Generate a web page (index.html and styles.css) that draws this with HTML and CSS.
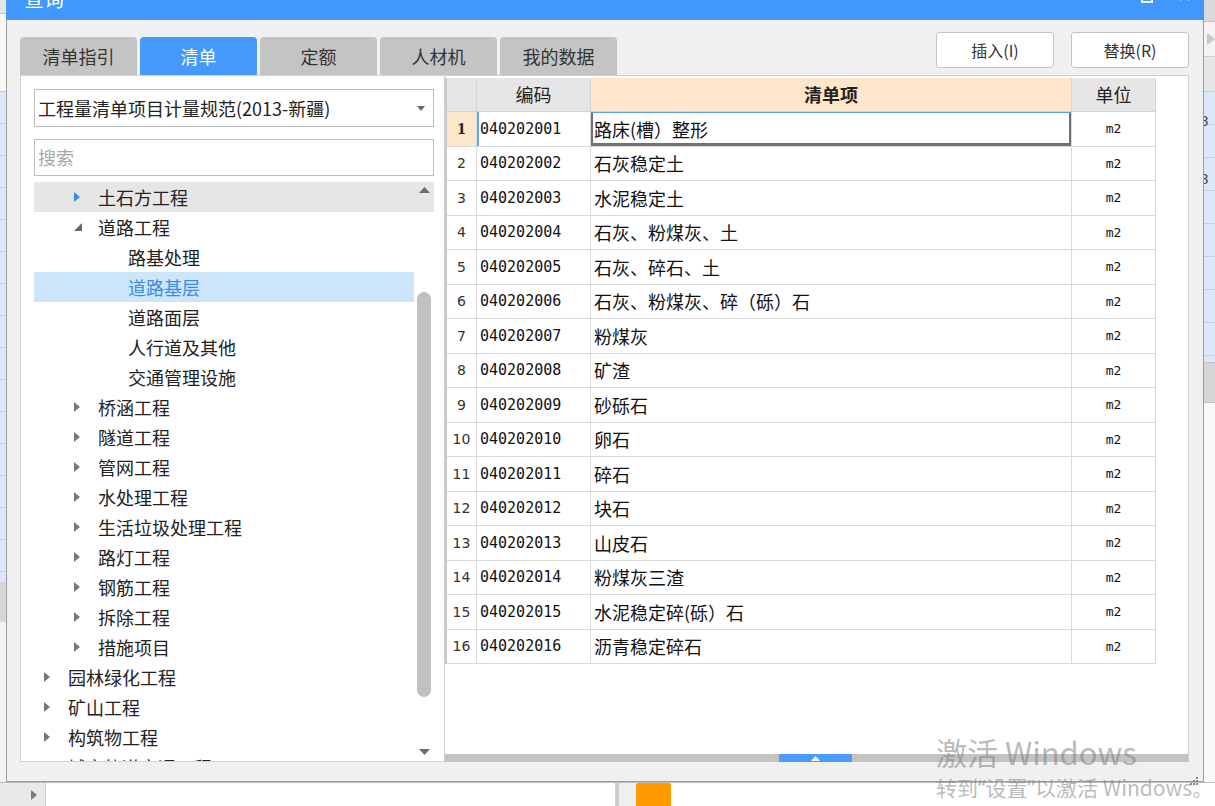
FILE: index.html
```html
<!DOCTYPE html>
<html lang="zh-CN">
<head>
<meta charset="utf-8">
<title>查询</title>
<link rel="stylesheet" href="styles.css">
</head>
<body>
<div class="screen">
  <div class="main">
    <div class="bg-left">
      <div class="bl-top"></div>
      <div class="bl-white"></div>
      <div class="bl-rows"></div>
      <div class="bl-grey"></div>
      <div class="bl-end"></div>
    </div>

    <div class="dialog">
      <div class="titlebar">
        <span class="title">查询</span>
        <span class="tb-btns"><span class="tb-max"></span><span class="tb-close">✕</span></span>
      </div>

      <div class="dlg-body">
        <div class="toprow">
          <div class="tabs">
            <div class="tab">清单指引</div>
            <div class="tab active">清单</div>
            <div class="tab">定额</div>
            <div class="tab">人材机</div>
            <div class="tab">我的数据</div>
          </div>
          <div class="btns">
            <div class="btn">插入(I)</div>
            <div class="btn">替换(R)</div>
          </div>
        </div>

        <div class="panels">
          <div class="left-panel">
            <div class="select">
              <span class="select-text">工程量清单项目计量规范(2013-新疆)</span>
              <svg class="caret" width="8" height="5" viewBox="0 0 8 5"><path d="M0 0H8L4 5Z" fill="#6b6b6b"/></svg>
            </div>
            <div class="search">搜索</div>
            <div class="tree">
              <div class="tree-list">
                <div class="node l2 hover"><span class="arw"><svg width="6" height="10" viewBox="0 0 6 10"><path d="M0 0L6 5L0 10Z" fill="#3d8ee8"/></svg></span>土石方工程</div>
                <div class="node l2"><span class="arw"><svg width="8" height="8" viewBox="0 0 8 8"><path d="M8 0V8H0Z" fill="#666"/></svg></span>道路工程</div>
                <div class="node l3">路基处理</div>
                <div class="node l3 selected">道路基层</div>
                <div class="node l3">道路面层</div>
                <div class="node l3">人行道及其他</div>
                <div class="node l3">交通管理设施</div>
                <div class="node l2"><span class="arw"><svg width="6" height="10" viewBox="0 0 6 10"><path d="M0 0L6 5L0 10Z" fill="#777"/></svg></span>桥涵工程</div>
                <div class="node l2"><span class="arw"><svg width="6" height="10" viewBox="0 0 6 10"><path d="M0 0L6 5L0 10Z" fill="#777"/></svg></span>隧道工程</div>
                <div class="node l2"><span class="arw"><svg width="6" height="10" viewBox="0 0 6 10"><path d="M0 0L6 5L0 10Z" fill="#777"/></svg></span>管网工程</div>
                <div class="node l2"><span class="arw"><svg width="6" height="10" viewBox="0 0 6 10"><path d="M0 0L6 5L0 10Z" fill="#777"/></svg></span>水处理工程</div>
                <div class="node l2"><span class="arw"><svg width="6" height="10" viewBox="0 0 6 10"><path d="M0 0L6 5L0 10Z" fill="#777"/></svg></span>生活垃圾处理工程</div>
                <div class="node l2"><span class="arw"><svg width="6" height="10" viewBox="0 0 6 10"><path d="M0 0L6 5L0 10Z" fill="#777"/></svg></span>路灯工程</div>
                <div class="node l2"><span class="arw"><svg width="6" height="10" viewBox="0 0 6 10"><path d="M0 0L6 5L0 10Z" fill="#777"/></svg></span>钢筋工程</div>
                <div class="node l2"><span class="arw"><svg width="6" height="10" viewBox="0 0 6 10"><path d="M0 0L6 5L0 10Z" fill="#777"/></svg></span>拆除工程</div>
                <div class="node l2"><span class="arw"><svg width="6" height="10" viewBox="0 0 6 10"><path d="M0 0L6 5L0 10Z" fill="#777"/></svg></span>措施项目</div>
                <div class="node l1"><span class="arw"><svg width="6" height="10" viewBox="0 0 6 10"><path d="M0 0L6 5L0 10Z" fill="#777"/></svg></span>园林绿化工程</div>
                <div class="node l1"><span class="arw"><svg width="6" height="10" viewBox="0 0 6 10"><path d="M0 0L6 5L0 10Z" fill="#777"/></svg></span>矿山工程</div>
                <div class="node l1"><span class="arw"><svg width="6" height="10" viewBox="0 0 6 10"><path d="M0 0L6 5L0 10Z" fill="#777"/></svg></span>构筑物工程</div>
                <div class="node l1"><span class="arw"><svg width="6" height="10" viewBox="0 0 6 10"><path d="M0 0L6 5L0 10Z" fill="#777"/></svg></span>城市轨道交通工程</div>
              </div>
              <div class="vscroll">
                <div class="vs-up"><svg width="11" height="6" viewBox="0 0 11 6"><path d="M0 6L5.5 0L11 6Z" fill="#6e6e6e"/></svg></div>
                <div class="vs-track"><div class="vs-thumb"></div></div>
                <div class="vs-down"><svg width="11" height="6" viewBox="0 0 11 6"><path d="M0 0H11L5.5 6Z" fill="#6e6e6e"/></svg></div>
              </div>
            </div>
          </div>

          <div class="right-panel">
            <div class="grid-wrap">
              <div class="grid">
                <div class="hc"></div><div class="hc">编码</div><div class="hc hc-main">清单项</div><div class="hc">单位</div>

                <div class="c num cur">1</div><div class="c code cur-code">040202001</div><div class="c name sel">路床(槽）整形</div><div class="c unit">m2</div>
                <div class="c num">2</div><div class="c code">040202002</div><div class="c name">石灰稳定土</div><div class="c unit">m2</div>
                <div class="c num">3</div><div class="c code">040202003</div><div class="c name">水泥稳定土</div><div class="c unit">m2</div>
                <div class="c num">4</div><div class="c code">040202004</div><div class="c name">石灰、粉煤灰、土</div><div class="c unit">m2</div>
                <div class="c num">5</div><div class="c code">040202005</div><div class="c name">石灰、碎石、土</div><div class="c unit">m2</div>
                <div class="c num">6</div><div class="c code">040202006</div><div class="c name">石灰、粉煤灰、碎（砾）石</div><div class="c unit">m2</div>
                <div class="c num">7</div><div class="c code">040202007</div><div class="c name">粉煤灰</div><div class="c unit">m2</div>
                <div class="c num">8</div><div class="c code">040202008</div><div class="c name">矿渣</div><div class="c unit">m2</div>
                <div class="c num">9</div><div class="c code">040202009</div><div class="c name">砂砾石</div><div class="c unit">m2</div>
                <div class="c num">10</div><div class="c code">040202010</div><div class="c name">卵石</div><div class="c unit">m2</div>
                <div class="c num">11</div><div class="c code">040202011</div><div class="c name">碎石</div><div class="c unit">m2</div>
                <div class="c num">12</div><div class="c code">040202012</div><div class="c name">块石</div><div class="c unit">m2</div>
                <div class="c num">13</div><div class="c code">040202013</div><div class="c name">山皮石</div><div class="c unit">m2</div>
                <div class="c num">14</div><div class="c code">040202014</div><div class="c name">粉煤灰三渣</div><div class="c unit">m2</div>
                <div class="c num">15</div><div class="c code">040202015</div><div class="c name">水泥稳定碎(砾）石</div><div class="c unit">m2</div>
                <div class="c num">16</div><div class="c code">040202016</div><div class="c name">沥青稳定碎石</div><div class="c unit">m2</div>
              </div>
            </div>
            <div class="hbar">
              <div class="hbar-thumb"><svg width="9" height="5" viewBox="0 0 9 5"><path d="M0 5L4.5 0L9 5Z" fill="#fff"/></svg></div>
            </div>
          </div>
        </div>
      </div>

      <div class="grip">
        <svg width="10" height="10" viewBox="0 0 10 10" fill="#8a8a8a">
          <rect x="7" y="1" width="2" height="2"/><rect x="4" y="4" width="2" height="2"/><rect x="7" y="4" width="2" height="2"/>
          <rect x="1" y="7" width="2" height="2"/><rect x="4" y="7" width="2" height="2"/><rect x="7" y="7" width="2" height="2"/>
        </svg>
      </div>
    </div>

    <div class="bg-right">
      <div class="br-top"></div>
      <div class="br-arrow"><svg width="8" height="12" viewBox="0 0 8 12"><path d="M0 0L8 6L0 12Z" fill="#c8c8c8"/></svg></div>
      <div class="br-head"></div>
      <div class="br-rows"><span class="br-txt">8</span><span class="br-txt">8</span></div>
      <div class="br-grey"></div>
      <div class="br-end"></div>
    </div>
  </div>

  <div class="bottombar">
    <div class="bb-left"><svg width="6" height="10" viewBox="0 0 6 10"><path d="M0 0L6 5L0 10Z" fill="#7a7a7a"/></svg></div>
    <div class="bb-white"></div>
    <div class="bb-sep"></div>
    <div class="bb-grey"></div>
    <div class="bb-orange"></div>
    <div class="bb-rest"></div>
  </div>

  <div class="watermark">
    <div class="wm1">激活 Windows</div>
    <div class="wm2">转到<span class="q">“</span>设置<span class="q">”</span>以激活 Windows。</div>
  </div>
</div>
</body>
</html>
```

FILE: styles.css
```css
* { box-sizing: border-box; margin: 0; padding: 0; }
html, body { width: 1215px; height: 806px; overflow: hidden; }
body {
  font-family: "Noto Sans CJK SC", "Microsoft YaHei", sans-serif;
  color: #222;
  background: #f0f0f0;
}
.screen { position: relative; width: 1215px; height: 806px; display: flex; flex-direction: column; overflow: hidden; }
.main { display: flex; height: 782px; flex: none; }

/* background app strips */
.bg-left { width: 6px; display: flex; flex-direction: column; }
.bl-top { height: 14px; background: #e4e4e4; border-bottom: 1px solid #c8c8c8; }
.bl-white { height: 78px; background: #f7f7f7; border-bottom: 1px solid #c8c8c8; }
.bl-rows {
  height: 490px;
  background: repeating-linear-gradient(to bottom, #dce8f9 0, #dce8f9 31px, #c9d3e0 31px, #c9d3e0 32px);
}
.bl-grey { height: 40px; background: #d6d6d6; }
.bl-end { flex: 1; background: #f2f2f2; }

.bg-right { width: 11px; display: flex; flex-direction: column; }
.br-top { height: 22px; background: #dadada; border-bottom: 1px solid #c4c4c4; }
.br-arrow { height: 34px; background: #f3f3f3; display: flex; align-items: center; padding-left: 3px; }
.br-head { height: 36px; background: #e6e6e6; border-top: 1px solid #cfcfcf; border-bottom: 1px solid #cfcfcf; }
.br-rows {
  height: 270px;
  display: flex; flex-direction: column;
  background: repeating-linear-gradient(to bottom, #dde9fb 0, #dde9fb 32px, #c9d3e0 32px, #c9d3e0 33px);
  font-family: "Liberation Sans", sans-serif; font-size: 15px; color: #444;
}
.br-txt { height: 58px; line-height: 58px; margin-left: -4px; }
.br-grey { height: 40px; background: #d6d6d6; border-top: 1px solid #c4c4c4; }
.br-end { flex: 1; background: #f8f8f8; border-top: 1px solid #c4c4c4; }

/* dialog */
.dialog {
  position: relative;
  width: 1198px;
  display: flex; flex-direction: column;
  background: #f0f0f0;
  border: 1px solid #9d9d9d; border-top: none;
}
.titlebar {
  flex: none;
  height: 20px;
  background: #4198fc;
  overflow: hidden;
  display: flex; justify-content: space-between; align-items: flex-start;
  padding: 0 12px 0 18px;
  margin: 0 -1px;
}
.title { color: #fff; font-size: 20px; line-height: 26px; margin-top: -14px; }
.tb-btns { display: flex; gap: 24px; align-items: flex-start; }
.tb-max { width: 12px; height: 12px; border: 2px solid #fff; margin-top: -9px; }
.tb-close { color: #fff; font-size: 18px; line-height: 20px; margin-top: -14px; font-family: "DejaVu Sans", sans-serif; font-weight: bold; }

.dlg-body { flex: 1; min-height: 0; display: flex; flex-direction: column; padding: 12px 14px 19px 13px; }
.toprow { flex: none; display: flex; justify-content: space-between; align-items: flex-start; height: 43px; }
.tabs { display: flex; gap: 3px; margin-top: 5px; }
.tab {
  width: 117px; height: 38px;
  background: #c4c4c4;
  border-radius: 4px 4px 0 0;
  text-align: center;
  font-size: 18px; line-height: 38px;
  color: #333;
}
.tab.active { background: #4499fb; color: #fff; }
.btns { display: flex; gap: 17px; }
.btn {
  width: 118px; height: 36px;
  background: #fff;
  border: 1px solid #c6c6c6;
  border-radius: 3px;
  text-align: center;
  font-size: 16px; line-height: 34px;
  color: #333;
}

.panels { flex: 1; display: flex; min-height: 0; overflow: hidden; }

/* left panel */
.left-panel {
  width: 424px;
  background: #fff;
  border: 1px solid #d4d4d4; border-right: none;
  padding: 13px 10px 0 13px;
  display: flex; flex-direction: column;
  min-height: 0;
}
.select {
  flex: none;
  height: 38px;
  border: 1px solid #bdbdbd;
  display: flex; align-items: center; justify-content: space-between;
  padding: 0 8px 0 3px;
}
.select-text { font-size: 18px; line-height: 36px; color: #222; white-space: nowrap; }
.search {
  flex: none;
  margin-top: 12px;
  height: 37px;
  border: 1px solid #bdbdbd;
  padding-left: 3px;
  font-size: 18px; line-height: 35px;
  color: #a8a8a8;
}
.tree { margin-top: 6px; flex: 1; display: flex; overflow: hidden; min-height: 0; }
.tree-list { flex: 1; overflow: hidden; }
.node {
  height: 30px;
  display: flex; align-items: center;
  font-size: 18px; line-height: 30px;
  white-space: nowrap;
  color: #222;
}
.node.l1 { padding-left: 10px; }
.node.l2 { padding-left: 40px; }
.node.l3 { padding-left: 94px; }
.arw { width: 24px; display: flex; align-items: center; }
.node.hover { background: #e6e6e6; }
.node.selected { background: #cce5fa; color: #3c8de6; }

.vscroll { width: 20px; display: flex; flex-direction: column; min-height: 0; }
.vs-up { flex: none; height: 30px; background: #e6e6e6; display: flex; justify-content: center; padding-top: 5px; }
.vs-track { flex: 1; min-height: 0; padding-top: 80px; display: flex; justify-content: center; align-items: flex-start; }
.vs-thumb { width: 14px; height: 405px; background: #c1c1c1; border-radius: 7px; }
.vs-down { flex: none; height: 14px; display: flex; justify-content: center; padding-top: 2px; }

/* right panel */
.right-panel {
  flex: 1;
  background: #fff;
  border: 1px solid #cfcfcf; border-bottom: none;
  display: flex; flex-direction: column;
  min-height: 0;
}
.grid-wrap { flex: 1; min-height: 0; padding-top: 2px; }
.grid {
  display: grid;
  grid-template-columns: 30px 114px 481px 84px;
  grid-template-rows: 34px;
  grid-auto-rows: 34.5px;
  width: 711px;
  border-left: 2px solid #c9c9c9;
}
.hc {
  background: #e6e6e6;
  border-right: 1px solid #d4d4d4; border-bottom: 1px solid #d4d4d4;
  text-align: center;
  font-size: 18px; line-height: 33px;
  color: #222;
}
.hc-main { background: #fde6c9; font-weight: bold; }
.c {
  border-right: 1px solid #dadada; border-bottom: 1px solid #dadada;
  display: flex; align-items: center;
  white-space: nowrap;
  color: #111;
}
.num {
  justify-content: center;
  font-family: "DejaVu Sans", sans-serif; font-size: 14px; color: #333;
}
.num.cur { background: #fde6c9; font-family: "Liberation Serif", serif; font-weight: bold; font-size: 17px; color: #222; }
.code { padding-left: 3px; font-family: "DejaVu Sans Mono", monospace; font-size: 15px; }
.cur-code { box-shadow: inset 2px 0 0 #6aa6ec; }
.name { padding-left: 3px; font-size: 18px; }
.name.sel { box-shadow: inset 0 1px 0 #5c9fec, inset 2px 0 0 #707070, inset -2px 0 0 #707070, inset 0 -3px 0 #707070; }
.unit { justify-content: center; font-family: "DejaVu Sans Mono", monospace; font-size: 13px; }

.hbar { flex: none; height: 8px; background: #c3c3c3; padding-left: 334px; }
.hbar-thumb { width: 73px; height: 8px; background: #4a9bf8; display: flex; justify-content: center; align-items: center; }

.grip { position: absolute; right: 4px; bottom: 4px; width: 10px; height: 10px; }

/* bottom bar of the app */
.bottombar { flex: none; height: 24px; display: flex; border-top: 1px solid #bcbcbc; }
.bb-left { width: 46px; background: #e9e9e9; border-right: 1px solid #cfcfcf; display: flex; align-items: center; justify-content: flex-end; padding-right: 8px; }
.bb-white { width: 569px; background: #fff; }
.bb-sep { width: 4px; background: #cdcdcd; }
.bb-grey { width: 17px; background: #efefef; }
.bb-orange { width: 35px; background: #ff9a00; border-radius: 2px 2px 0 0; }
.bb-rest { flex: 1; background: #fff; }

/* windows watermark (overlay) */
.watermark {
  position: absolute; left: 936px; top: 731px;
  color: rgba(128,128,128,0.55);
  white-space: nowrap;
  pointer-events: none;
}
.wm1 { font-size: 31px; line-height: 42px; font-family: "Noto Sans CJK SC", sans-serif; }
.wm2 { font-size: 21px; line-height: 28px; font-family: "Noto Sans CJK SC", sans-serif; }
.q { font-family: "Noto Sans", sans-serif; }
```
